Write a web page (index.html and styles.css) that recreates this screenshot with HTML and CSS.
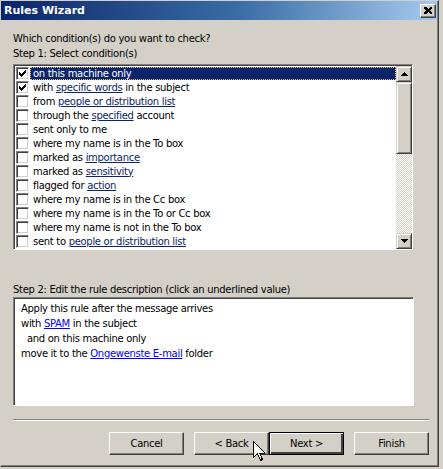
FILE: index.html
```html
<!DOCTYPE html>
<html>
<head>
<meta charset="utf-8">
<link rel="stylesheet" href="styles.css">
</head>
<body>
<div class="dialog">
  <div class="frame">
    <div class="titlebar">
      <span class="title">Rules Wizard</span>
      <span class="close"><svg width="8" height="7" viewBox="0 0 8 7" shape-rendering="crispEdges"><path d="M0 0h2l2 2 2-2h2v1l-2 2.5 2 2.5v1h-2l-2-2-2 2h-2v-1l2-2.5-2-2.5z" fill="#000"/></svg></span>
    </div>
    <div class="content">
      <p class="q">Which condition(s) do you want to check?</p>
      <p class="step">Step 1: Select condition(s)</p>
      <div class="listbox">
        <ul class="items">
          <li class="item selected"><span class="cb"><svg class="tick" width="7" height="7" viewBox="0 0 7 7" shape-rendering="crispEdges"><path d="M0 2h1v1h1v1h1v-1h1v-1h1v-1h1v-1h1v3h-1v1h-1v1h-1v1h-1v1h-1v-1h-1v-1h-1z" fill="#000"/></svg></span><span class="label">on this machine only</span></li>
          <li class="item"><span class="cb"><svg class="tick" width="7" height="7" viewBox="0 0 7 7" shape-rendering="crispEdges"><path d="M0 2h1v1h1v1h1v-1h1v-1h1v-1h1v-1h1v3h-1v1h-1v1h-1v1h-1v1h-1v-1h-1v-1h-1z" fill="#000"/></svg></span><span class="label">with <a class="lnk">specific words</a> in the subject</span></li>
          <li class="item"><span class="cb"></span><span class="label">from <a class="lnk">people or distribution list</a></span></li>
          <li class="item"><span class="cb"></span><span class="label">through the <a class="lnk">specified</a> account</span></li>
          <li class="item"><span class="cb"></span><span class="label">sent only to me</span></li>
          <li class="item"><span class="cb"></span><span class="label">where my name is in the To box</span></li>
          <li class="item"><span class="cb"></span><span class="label">marked as <a class="lnk">importance</a></span></li>
          <li class="item"><span class="cb"></span><span class="label">marked as <a class="lnk">sensitivity</a></span></li>
          <li class="item"><span class="cb"></span><span class="label">flagged for <a class="lnk">action</a></span></li>
          <li class="item"><span class="cb"></span><span class="label">where my name is in the Cc box</span></li>
          <li class="item"><span class="cb"></span><span class="label">where my name is in the To or Cc box</span></li>
          <li class="item"><span class="cb"></span><span class="label">where my name is not in the To box</span></li>
          <li class="item"><span class="cb"></span><span class="label">sent to <a class="lnk">people or distribution list</a></span></li>
        </ul>
        <div class="scrollbar">
          <div class="sbtn"><svg width="7" height="4" viewBox="0 0 7 4" shape-rendering="crispEdges"><path d="M3 0h1v1h1v1h1v1h1v1h-7v-1h1v-1h1v-1h1z" fill="#000"/></svg></div>
          <div class="thumb"></div>
          <div class="track"></div>
          <div class="sbtn"><svg width="7" height="4" viewBox="0 0 7 4" shape-rendering="crispEdges"><path d="M0 0h7v1h-1v1h-1v1h-1v1h-1v-1h-1v-1h-1v-1h-1z" fill="#000"/></svg></div>
        </div>
      </div>
      <p class="step2">Step 2: Edit the rule description (click an underlined value)</p>
      <div class="desc">
        <p>Apply this rule after the message arrives</p>
        <p>with <a class="blue">SPAM</a> in the subject</p>
        <p class="indent">and on this machine only</p>
        <p>move it to the <a class="blue">Ongewenste E-mail</a> folder</p>
      </div>
      <div class="sep"></div>
      <div class="buttons">
        <button class="btn cancel">Cancel</button>
        <button class="btn">&lt; Back</button>
        <button class="btn default">Next &gt;</button>
        <button class="btn finish">Finish</button>
      </div>
    </div>
  </div>
  <svg class="cursor" width="12" height="21" viewBox="0 0 12 21" shape-rendering="crispEdges"><path d="M0.5 0.5v16l4-4 3 7 2-1-3-6.5h5.5z" fill="#fff" stroke="#000" stroke-width="1"/></svg>
</div>
</body>
</html>
```
FILE: styles.css
```css
* { box-sizing: border-box; margin: 0; padding: 0; }
html, body { width: 443px; height: 469px; overflow: hidden; }
body {
  background: #d4d0c8;
  font-family: "DejaVu Sans", "Liberation Sans", sans-serif;
  font-size: 10px;
  letter-spacing: -0.3px;
  color: #000;
}
.dialog {
  position: relative;
  width: 439px;
  height: 467px;
  background: #d4d0c8;
  border-top: 1px solid #d4d0c8;
  border-left: 1px solid #d4d0c8;
  border-right: 1px solid #404040;
  border-bottom: 1px solid #404040;
}
.frame {
  height: 100%;
  border-right: 1px solid #808080;
  border-bottom: 1px solid #808080;
  display: flex;
  flex-direction: column;
}
.titlebar {
  height: 19px;
  background: linear-gradient(to right, #0a246a 0%, #3a6ea5 55%, #a6caf0 100%);
  display: flex;
  align-items: center;
  justify-content: space-between;
  padding: 0 1px 0 3px;
}
.title {
  color: #fff;
  font-weight: bold;
  font-size: 11px;
  letter-spacing: 0;
  line-height: 13px;
}
.close {
  width: 16px;
  height: 14px;
  background: #d4d0c8;
  border: 1px solid;
  border-color: #fff #404040 #404040 #fff;
  box-shadow: inset -1px -1px #808080;
  display: flex;
  align-items: center;
  justify-content: center;
}
.content {
  flex: 1;
  display: flex;
  flex-direction: column;
  padding: 0 8px 0 12px;
  line-height: 13px;
}
.q { margin-top: 12px; }
.step { margin-top: 2px; }
.listbox {
  margin-top: 4px;
  width: 400px;
  height: 186px;
  background: #fff;
  border: 1px solid;
  border-color: #808080 #fff #fff #808080;
  box-shadow: inset 1px 1px #404040;
  padding: 1px 0 0 1px;
  display: flex;
}
.items {
  list-style: none;
  flex: 1;
  display: flex;
  flex-direction: column;
}
.item {
  height: 14px;
  display: flex;
  align-items: center;
  white-space: nowrap;
}
.cb {
  width: 13px;
  height: 13px;
  margin-left: 1px;
  background: #fff;
  border: 1px solid;
  border-color: #808080 #fff #fff #808080;
  box-shadow: inset 1px 1px #404040, inset -1px -1px #d4d0c8;
  display: flex;
  align-items: center;
  justify-content: center;
  flex: none;
}
.label {
  margin-left: 1px;
  padding-left: 2px;
  height: 13px;
  line-height: 11px;
  flex: 1;
  border: 1px solid transparent;
}
.selected .label {
  background: #0a246a;
  color: #fff;
  border: 1px dotted #e8c878;
}
.lnk { color: #0a246a; text-decoration: underline; }
.blue { color: #0000ff; text-decoration: underline; }
.scrollbar {
  width: 16px;
  display: flex;
  flex-direction: column;
}
.sbtn, .thumb {
  background: #d4d0c8;
  border: 1px solid;
  border-color: #d4d0c8 #404040 #404040 #d4d0c8;
  box-shadow: inset 1px 1px #fff, inset -1px -1px #808080;
}
.sbtn {
  height: 16px;
  display: flex;
  align-items: center;
  justify-content: center;
}
.thumb { height: 72px; }
.track {
  flex: 1;
  background: repeating-conic-gradient(#d4d0c8 0 25%, #fff 0 50%) 0 0 / 2px 2px;
}
.step2 { margin-top: 33px; }
.desc {
  margin-top: 1px;
  width: 401px;
  height: 109px;
  background: #fff;
  border: 1px solid;
  border-color: #808080 #fff #fff #808080;
  box-shadow: inset 1px 1px #404040;
  padding: 3px 0 0 7px;
  line-height: 15px;
}
.indent { padding-left: 6px; }
.sep {
  margin-top: 13px;
  height: 2px;
  border-top: 1px solid #808080;
  border-bottom: 1px solid #fff;
}
.buttons {
  margin-top: 11px;
  display: flex;
  justify-content: flex-end;
}
.btn {
  width: 75px;
  height: 23px;
  font: inherit;
  letter-spacing: inherit;
  color: #000;
  background: #d4d0c8;
  border: 1px solid;
  border-color: #fff #404040 #404040 #fff;
  box-shadow: inset -1px -1px #808080;
}
.cancel { margin-right: 10px; }
.finish { margin-left: 10px; }
.btn.default {
  border: 1px solid #000;
  box-shadow: inset 1px 1px #fff, inset -2px -2px #404040, inset -1px -1px #808080;
}
.cursor {
  position: absolute;
  left: 252px;
  top: 440px;
}
```
